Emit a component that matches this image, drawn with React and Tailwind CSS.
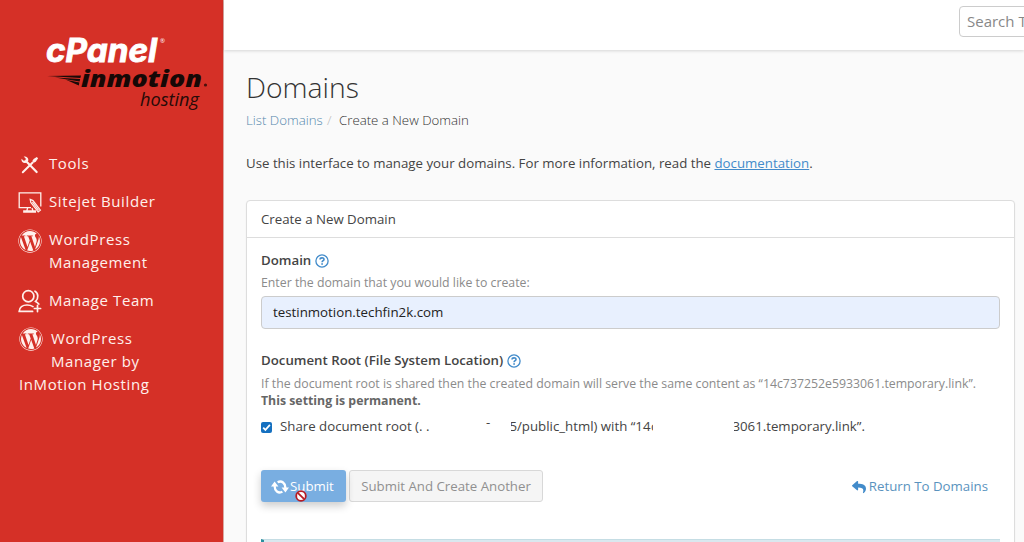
import React from 'react';
import { FaReply, FaWordpress } from 'react-icons/fa';

const ToolsIcon = () => (
  <svg viewBox="0 0 20 20" className="w-[18px] h-[18px]" fill="none" stroke="currentColor">
    <path d="M6 6 L17.4 17.8" strokeWidth="2.4" strokeLinecap="round" />
    <path d="M3 .6 L5.4 3 L4.8 4.8 L3 5.4 L.6 3 C0 6.2 2.4 8.6 5.6 7.6 L8 5.2 C8.8 2.2 6 -.2 3 .6 Z" fill="currentColor" stroke="none" />
    <path d="M2 18 L13 7.2" strokeWidth="2.2" strokeLinecap="round" />
    <path d="M12.6 5.6 L14 3.4 L17.6 1 L19 2.4 L16.6 6 L14.4 7.4 Z" fill="currentColor" stroke="none" />
  </svg>
);

const BuilderIcon = () => (
  <svg viewBox="0 0 24 23" className="w-6 h-[23px]" fill="none" stroke="currentColor" strokeWidth="1.3">
    <path d="M13 16.6 H1.2 V1.8 H22.8 V15.5" />
    <path d="M9.6 16.8 L8.8 20 M14 17 L15 20 M5.8 21.2 H17.4 V20 H5.8 Z" />
    <path d="M12.2 8.4 L15 9.6 L22.4 19.2 L20.2 21 L12.8 11.4 Z M14.4 11 L20.6 19.4" strokeWidth="1.2" />
  </svg>
);

const TeamIcon = () => (
  <svg viewBox="0 0 24 24" className="w-6 h-6" fill="none" stroke="currentColor" strokeWidth="1.7" strokeLinecap="round">
    <circle cx="10.3" cy="7.2" r="5.6" />
    <path d="M17 2.2 C20.4 4 20.8 9.4 17.6 12.4 C18.8 13 19.8 13.8 20.8 15" />
    <path d="M14.6 22.4 H1.2 C1.4 18.6 4.6 16 9 16 C11.8 16 13.4 16.6 15 17.6" />
    <path d="M19.5 16.4 V22.6 M16.4 19.5 H22.6" />
  </svg>
);

const HelpIcon = () => (
  <svg viewBox="0 0 14 14" className="w-[14px] h-[14px] shrink-0 text-[#428bca]" fill="none" stroke="currentColor">
    <circle cx="7" cy="7" r="6.1" strokeWidth="1.3" />
    <path d="M5 5.5 C5.1 3.3 9 3.3 9 5.4 C9 6.7 7.1 6.7 7.1 8.3" strokeWidth="1.6" />
    <path d="M7.1 9.2 V10.8" strokeWidth="1.7" />
  </svg>
);

const SpinnerIcon = () => (
  <svg viewBox="0 0 18 14" className="w-[18px] h-[14px] mr-px shrink-0" fill="none" stroke="currentColor" strokeWidth="2.3">
    <path d="M6.6 2.2 C10.6 .2 14.6 3 14.3 8" />
    <path d="M11.4 11.8 C7.4 13.8 3.4 11 3.7 6" />
    <path d="M10.6 7.6 H18 L14.4 12.4 Z M0 6.4 H7.4 L3.6 1.6 Z" fill="currentColor" stroke="none" />
  </svg>
);

const Logo = () => (
  <svg viewBox="0 0 170 80" className="w-[170px] h-20 ml-[42px]" fontFamily="'Open Sans', sans-serif">
    <text x="4" y="28" fontFamily="Inter, sans-serif" fontSize="32" fontWeight="700" fontStyle="italic" fill="#fff" stroke="#fff" strokeWidth=".9" textLength="111" lengthAdjust="spacingAndGlyphs">cPanel</text>
    <text x="118" y="9" fontSize="6" fill="#fff">®</text>
    <path d="M5 42 L39 41.4 L38.4 44 Z M13 43.4 L38.2 45 L37.6 47.6 Z M24 45.8 L37.4 48.6 L36.8 51.6 Z" fill="#1a0a08" />
    <text x="39" y="53" fontSize="23" fontWeight="800" fontStyle="italic" fill="#160806" textLength="121" lengthAdjust="spacingAndGlyphs">inmotion</text>
    <circle cx="163.5" cy="51" r="1.6" fill="#4a100c" />
    <text x="98" y="72" fontSize="19" fontStyle="italic" fill="#260b08" textLength="59" lengthAdjust="spacingAndGlyphs">hosting</text>
  </svg>
);

const Sidebar = () => (
  <aside className="w-[224px] shrink-0 bg-[#d53027] border-r border-[#d9a9a2] text-[#fff0ec]">
    <div className="pt-[34px]">
      <Logo />
    </div>
    <nav className="mt-[38px] pl-[18px] text-[15px] leading-[23px] font-medium tracking-[0.6px]">
      <div className="flex h-[38px]">
        <span className="w-[31px] pl-[3px] pt-[4px]"><ToolsIcon /></span>
        <span>Tools</span>
      </div>
      <div className="flex h-[38px]">
        <span className="w-[31px] pt-px"><BuilderIcon /></span>
        <span>Sitejet Builder</span>
      </div>
      <div className="flex h-[61px]">
        <span className="w-[31px] pt-px"><FaWordpress className="w-6 h-6" /></span>
        <span>WordPress<br />Management</span>
      </div>
      <div className="flex h-[38px]">
        <span className="w-[31px]"><TeamIcon /></span>
        <span>Manage Team</span>
      </div>
      <div className="flex">
        <span className="w-[33px] pl-px"><FaWordpress className="w-6 h-6" /></span>
        <span>WordPress<br />Manager by</span>
      </div>
      <div className="pl-px">InMotion Hosting</div>
    </nav>
  </aside>
);

const App = () => {
  return (
    <div className="flex w-[1024px] h-[542px] overflow-hidden bg-[#fafafa] font-['Open_Sans',sans-serif] text-[#444]">
      <Sidebar />
      <div className="w-[800px] shrink-0 flex flex-col">
        <header className="h-[50px] shrink-0 bg-white shadow-[0_1px_3px_rgba(0,0,0,0.15)] pt-[6px] pl-[735px] overflow-hidden">
          <div className="w-[180px] h-[31px] border border-[#ccc] rounded-[4px] pl-[7px] text-[15px] leading-[29px] text-[#888]">
            Search Tools
          </div>
        </header>

        <main className="flex-1 pl-[22px] pr-[9px]">
          <h1 className="mt-[17px] text-[28.3px] leading-[40px] font-light text-[#333]">Domains</h1>
          <div className="flex mt-[3px] text-[13.25px] leading-[20px] font-light">
            <span className="w-[81px] text-[#5689ad]">List Domains</span>
            <span className="w-[12px] text-[#bbb]">/</span>
            <span className="text-[#333]">Create a New Domain</span>
          </div>
          <p className="mt-[23px] text-[13.27px] leading-[20px] whitespace-nowrap">
            Use this interface to manage your domains. For more information, read the <a className="text-[#428bca] underline">documentation</a>.
          </p>

          <section className="mt-[27px] h-[400px] bg-white border border-[#ddd] rounded-[4px] shadow-[0_1px_2px_rgba(0,0,0,0.06)]">
            <div className="h-[37px] border-b border-[#ddd] pl-[14px] text-[13.25px] leading-[36px]">Create a New Domain</div>
            <div className="px-[14px]">
              <div className="flex items-center gap-[4px] mt-[13px] h-[20px] text-[13.25px] font-semibold">
                Domain <HelpIcon />
              </div>
              <div className="mt-px text-[12.3px] leading-[22px] text-[#8b8b8b]">Enter the domain that you would like to create:</div>
              <div className="mt-[2px] h-[33px] border border-[#ccc] rounded-[4px] bg-[#e8f0fe] pl-[11px] text-[13.3px] leading-[31px] text-[#222]">
                testinmotion.techfin2k.com
              </div>

              <div className="flex items-center gap-[4px] mt-[22px] h-[20px] text-[13.25px] font-semibold whitespace-nowrap">
                Document Root (File System Location) <HelpIcon />
              </div>
              <div className="mt-[4px] text-[12.3px] leading-[17px] text-[#8b8b8b] whitespace-nowrap">
                If the document root is shared then the created domain will serve the same content as “14c737252e5933061.temporary.link”.
                <br />
                <strong className="text-[#666]">This setting is permanent.</strong>
              </div>

              <div className="flex items-center mt-[7px] h-[20px] text-[13.25px] leading-[20px] whitespace-nowrap">
                <span className="w-[11px] h-[11px] mt-[3px] shrink-0 rounded-[2px] bg-[#1570c0] flex items-center justify-center">
                  <svg viewBox="0 0 11 11" className="w-[11px] h-[11px]" fill="none" stroke="#fff" strokeWidth="1.7">
                    <path d="M2.2 5.6 L4.4 7.9 L8.9 2.9" />
                  </svg>
                </span>
                <span className="w-[155px] shrink-0 pl-[8px]">Share document root (. .</span>
                <span className="w-[84px] shrink-0 pl-[59px] pb-[9px]">-</span>
                <span className="w-[6px] shrink-0 flex justify-end overflow-hidden">5</span>
                <span className="w-[134px] shrink-0">/public_html) with “14</span>
                <span className="w-[2px] shrink-0 overflow-hidden">c</span>
                <span className="w-[81px] shrink-0" />
                <span className="w-[6px] shrink-0 flex justify-end overflow-hidden">3</span>
                <span>061.temporary.link”.</span>
              </div>

              <div className="flex items-center mt-[34px] h-[32px] text-[13.25px]">
                <button className="relative flex items-center w-[85px] h-[32px] shrink-0 pl-[10px] pt-px rounded-[3px] bg-[#79aee1] text-white shadow-[0_4px_8px_rgba(0,0,0,0.2)]">
                  <SpinnerIcon />
                  Submit
                  <svg viewBox="0 0 12 12" className="absolute left-[34px] top-[20px] w-3 h-3">
                    <circle cx="6" cy="6" r="4.8" fill="#fff" stroke="#b71c24" strokeWidth="1.8" />
                    <path d="M2.8 2.8 L9.2 9.2" stroke="#b71c24" strokeWidth="1.8" />
                  </svg>
                </button>
                <button className="w-[194px] h-[32px] shrink-0 ml-[3px] pt-[2px] border border-[#d8d8d8] rounded-[3px] bg-[#f5f5f5] text-[#909090] whitespace-nowrap">
                  Submit And Create Another
                </button>
                <a className="flex items-center ml-auto mr-[12px] pt-[2px] text-[#5a93be] whitespace-nowrap">
                  <FaReply className="w-[14px] h-[14px] mr-[3px] text-[#428bca]" />
                  Return To Domains
                </a>
              </div>

              <div className="mt-[37px] h-[50px] border-l-[3px] border-l-[#2a8f9e] border-t border-t-[#c5dde4] bg-[#d9e8ef]" />
            </div>
          </section>
        </main>
      </div>
    </div>
  );
};

export default App;
